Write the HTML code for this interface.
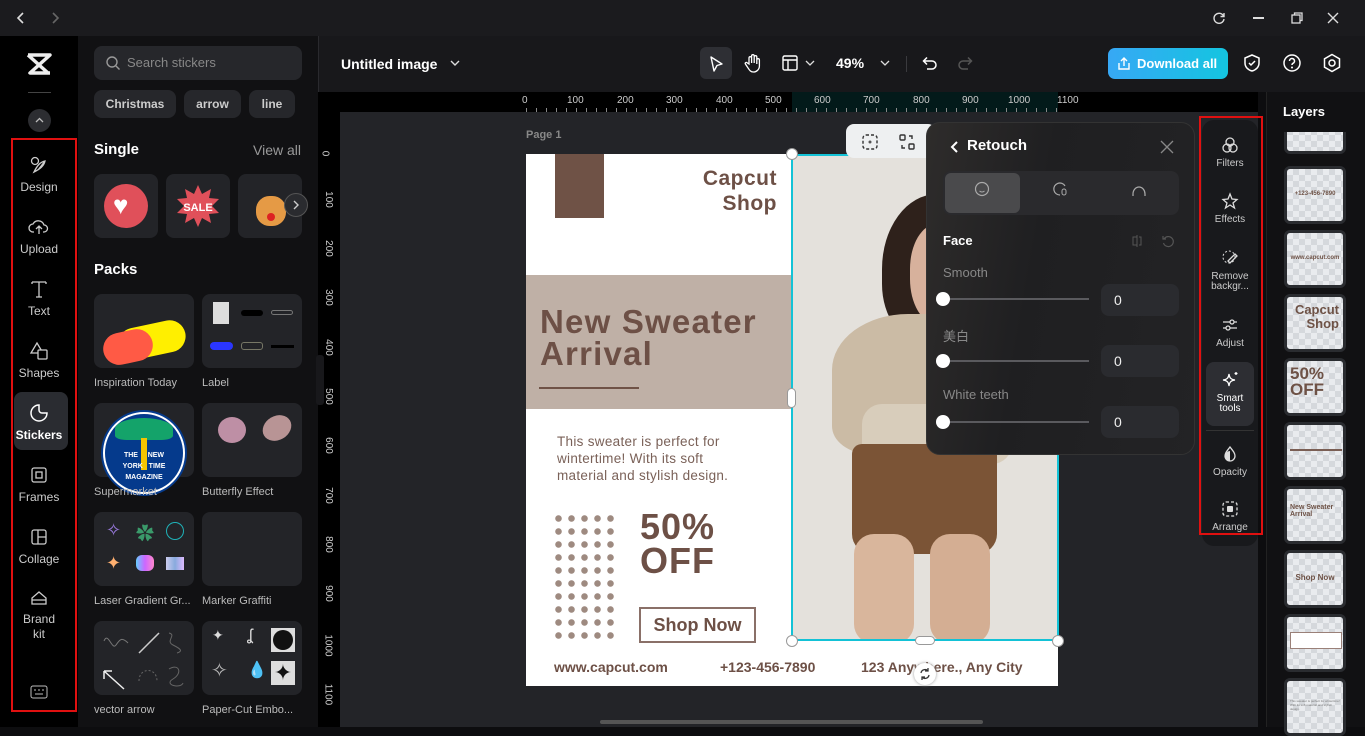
<!DOCTYPE html>
<html><head><meta charset="utf-8"><style>
*{box-sizing:border-box;margin:0;padding:0}
body{width:1365px;height:727px;overflow:hidden;background:#0d0d0f;font-family:"Liberation Sans","Noto Sans CJK SC",sans-serif;position:relative;color:#ddd}
.a{position:absolute}
.rail-i{position:absolute;left:0;width:78px;text-align:center;font-size:12px;color:#ccc}
.rail-i svg{display:block;margin:0 auto 5px}
.chip{position:absolute;top:90px;height:28px;border-radius:8px;background:#26272b;color:#ccc;font-size:12px;font-weight:bold;line-height:28px;text-align:center}
.card{position:absolute;background:#232428;border-radius:8px}
.lbl{position:absolute;font-size:11px;color:#bbb;white-space:nowrap}
.ti{position:absolute;left:1206px;width:48px;text-align:center;font-size:10px;color:#ccc;line-height:10px}
.ti svg{display:block;margin:0 auto 5px}
.ly{position:absolute;left:1284px;width:62px;height:58px;border-radius:6px;border:3px solid #2a2c30;background-color:#e9ebee;background-image:linear-gradient(45deg,#d5d8dc 25%,transparent 25%,transparent 75%,#d5d8dc 75%),linear-gradient(45deg,#d5d8dc 25%,transparent 25%,transparent 75%,#d5d8dc 75%);background-size:12px 12px;background-position:0 0,6px 6px;color:#6e5246;font-weight:bold;overflow:hidden}
.brown{color:#6d5046}
.sl{position:absolute;left:943px;width:146px;height:2px;background:#5a5a5e}
.knob{position:absolute;width:14px;height:14px;border-radius:50%;background:#fff}
.num{position:absolute;left:1101px;width:78px;height:32px;border-radius:8px;background:#2a2b2f;color:#eee;font-size:14px;line-height:32px;padding-left:13px}
</style></head><body>
<div class="a" style="left:0;top:0;width:1365px;height:36px;background:#1b1b1e"></div>
<svg class="a" style="left:14px;top:11px" width="14" height="14"><path d="M9 2L4 7l5 5" stroke="#ddd" stroke-width="1.6" fill="none"/></svg>
<svg class="a" style="left:48px;top:11px" width="14" height="14"><path d="M5 2l5 5-5 5" stroke="#666" stroke-width="1.6" fill="none"/></svg>
<svg class="a" style="left:1212px;top:11px" width="14" height="14"><path d="M11.5 5A5 5 0 1 0 12 8M12 2v3.5H8.5" stroke="#ddd" stroke-width="1.4" fill="none"/></svg>
<div class="a" style="left:1253px;top:17px;width:11px;height:1.5px;background:#ddd"></div>
<svg class="a" style="left:1290px;top:11px" width="14" height="14"><rect x="2" y="4" width="8" height="8" stroke="#ddd" fill="none" stroke-width="1.3"/><path d="M4.5 4V2h7.5v7.5H10" stroke="#ddd" fill="none" stroke-width="1.3"/></svg>
<svg class="a" style="left:1326px;top:11px" width="14" height="14"><path d="M2 2l10 10M12 2L2 12" stroke="#ddd" stroke-width="1.4"/></svg>

<div class="a" style="left:0;top:36px;width:78px;height:691px;background:#000"></div>
<svg class="a" style="left:26px;top:52px" width="26" height="24"><path d="M2 3h22L4 21h20M2 3l20 18M24 3L4 21" stroke="#eee" stroke-width="3.5" fill="none" stroke-linejoin="round"/></svg>
<div class="a" style="left:28px;top:92px;width:23px;height:1px;background:#444"></div>
<div class="a" style="left:28px;top:109px;width:23px;height:23px;border-radius:50%;background:#2c2d31"></div>
<svg class="a" style="left:34px;top:115px" width="11" height="11"><path d="M2 7l3.5-3.5L9 7" stroke="#bbb" stroke-width="1.3" fill="none"/></svg>
<div class="a" style="left:11px;top:138px;width:66px;height:574px;border:2px solid #e01010"></div>
<div class="rail-i" style="top:155px"><svg width="20" height="20"><circle cx="6" cy="6" r="3.5" stroke="#ccc" fill="none" stroke-width="1.3"/><path d="M9 15l7-9M5 17c3-6 6-10 11-11-1 5-5 8-11 11z" stroke="#ccc" fill="none" stroke-width="1.3"/></svg>Design</div>
<div class="rail-i" style="top:217px"><svg width="22" height="20"><path d="M6 15H5a4 4 0 0 1 0-8 6 6 0 0 1 11 1 3.5 3.5 0 0 1 0 7h-1M11 17V9M8 12l3-3 3 3" stroke="#ccc" fill="none" stroke-width="1.3"/></svg>Upload</div>
<div class="rail-i" style="top:279px"><svg width="20" height="20"><path d="M3 3h14M10 3v15M3 3v2M17 3v2M7 18h6" stroke="#ccc" fill="none" stroke-width="1.3"/></svg>Text</div>
<div class="rail-i" style="top:341px"><svg width="20" height="20"><path d="M8 2L2 12h12z" stroke="#ccc" fill="none" stroke-width="1.3"/><rect x="9" y="9" width="9" height="9" rx="1" stroke="#ccc" fill="#000" stroke-width="1.3"/></svg>Shapes</div>
<div class="a" style="left:14px;top:392px;width:54px;height:58px;border-radius:8px;background:#2a2c31"></div>
<div class="rail-i" style="top:403px;color:#fff;font-weight:bold"><svg width="20" height="20"><path d="M10 2a8 8 0 1 0 8 8h-5a3 3 0 0 1-3-3z" stroke="#fff" fill="none" stroke-width="1.5"/></svg>Stickers</div>
<div class="rail-i" style="top:465px"><svg width="20" height="20"><rect x="3" y="3" width="14" height="14" rx="2" stroke="#ccc" fill="none" stroke-width="1.3"/><rect x="7" y="7" width="6" height="6" stroke="#ccc" fill="none" stroke-width="1.3"/></svg>Frames</div>
<div class="rail-i" style="top:527px"><svg width="20" height="20"><rect x="3" y="3" width="14" height="14" rx="2" stroke="#ccc" fill="none" stroke-width="1.3"/><path d="M9 3v14M9 10h8" stroke="#ccc" stroke-width="1.3"/></svg>Collage</div>
<div class="rail-i" style="top:589px;line-height:15px"><svg width="20" height="18"><path d="M3 15V9l7-6 7 6v6zM3 11h14" stroke="#ccc" fill="none" stroke-width="1.3"/></svg>Brand<br>kit</div>
<svg class="a" style="left:30px;top:685px" width="18" height="14"><rect x="1" y="1" width="16" height="12" rx="2" stroke="#bbb" fill="none"/><path d="M4 5h2M8 5h2M12 5h2M5 9h8" stroke="#bbb"/></svg>

<div class="a" style="left:78px;top:36px;width:240px;height:691px;background:#111113"></div>
<div class="a" style="left:94px;top:46px;width:208px;height:34px;border-radius:8px;background:#26272b"></div>
<svg class="a" style="left:105px;top:55px" width="16" height="16"><circle cx="7" cy="7" r="5" stroke="#999" fill="none" stroke-width="1.4"/><path d="M11 11l3.5 3.5" stroke="#999" stroke-width="1.4"/></svg>
<div class="a" style="left:127px;top:55px;font-size:13px;color:#888">Search stickers</div>
<div class="chip" style="left:94px;width:82px">Christmas</div>
<div class="chip" style="left:184px;width:57px">arrow</div>
<div class="chip" style="left:249px;width:46px">line</div>
<div class="a" style="left:94px;top:141px;font-size:15px;font-weight:bold;color:#fff">Single</div>
<div class="a" style="left:253px;top:142px;font-size:14px;color:#999">View all</div>
<div class="card" style="left:94px;top:174px;width:64px;height:64px"></div>
<div class="a" style="left:104px;top:184px;width:44px;height:44px;border-radius:50%;background:#e0505a"></div>
<div class="a" style="left:113px;top:192px;font-size:26px;color:#fff;line-height:26px">♥</div>
<div class="card" style="left:166px;top:174px;width:64px;height:64px"></div>
<svg class="a" style="left:176px;top:184px" width="44" height="44"><polygon points="22,1 26,10 35,5 33,14 43,15 36,22 43,29 33,30 35,39 26,34 22,43 18,34 9,39 11,30 1,29 8,22 1,15 11,14 9,5 18,10" fill="#e0505a"/><text x="22" y="27" font-size="11" font-weight="bold" fill="#fff" text-anchor="middle" font-family="Liberation Sans">SALE</text></svg>
<div class="card" style="left:238px;top:174px;width:64px;height:64px"></div>
<div class="a" style="left:256px;top:196px;width:30px;height:30px;border-radius:45%;background:#e59a45"></div>
<div class="a" style="left:267px;top:213px;width:8px;height:8px;border-radius:50%;background:#d22"></div>
<div class="a" style="left:284px;top:193px;width:24px;height:24px;border-radius:50%;background:#2a2b2f;border:1px solid #555"></div>
<svg class="a" style="left:291px;top:200px" width="10" height="10"><path d="M3 1l4 4-4 4" stroke="#ccc" stroke-width="1.4" fill="none"/></svg>
<div class="a" style="left:94px;top:261px;font-size:15px;font-weight:bold;color:#fff">Packs</div>
<div class="card" style="left:94px;top:294px;width:100px;height:74px"></div>
<div class="a" style="left:118px;top:324px;width:68px;height:32px;border-radius:16px;background:#ffef00;transform:rotate(-12deg)"></div>
<div class="a" style="left:103px;top:331px;width:50px;height:32px;border-radius:16px;background:#ff5a45;transform:rotate(-12deg)"></div>
<div class="lbl" style="left:94px;top:377px">Inspiration Today</div>
<div class="card" style="left:202px;top:294px;width:100px;height:74px"></div>
<div class="a" style="left:213px;top:302px;width:16px;height:22px;background:#ddd"></div>
<div class="a" style="left:241px;top:310px;width:22px;height:6px;border-radius:3px;background:#000"></div>
<div class="a" style="left:271px;top:310px;width:22px;height:5px;border-radius:3px;border:1px solid #777"></div>
<div class="a" style="left:210px;top:342px;width:23px;height:8px;border-radius:4px;background:#2a36ff"></div>
<div class="a" style="left:241px;top:342px;width:22px;height:8px;border-radius:3px;border:1px solid #776"></div>
<div class="a" style="left:271px;top:345px;width:23px;height:3px;background:#000"></div>
<div class="lbl" style="left:202px;top:377px">Label</div>
<div class="card" style="left:94px;top:403px;width:100px;height:74px"></div>
<div class="a" style="left:103px;top:412px;width:82px;height:82px;border-radius:50%;background:#053a8c;border:2px solid #fff;box-shadow:0 0 0 2px #053a8c"></div>
<div class="a" style="left:115px;top:418px;width:58px;height:22px;border-radius:50% 50% 20% 20%;background:#14a36a"></div>
<div class="a" style="left:141px;top:438px;width:6px;height:32px;background:#f5c400"></div>
<div class="a" style="left:104px;top:450px;width:80px;font-size:7px;font-weight:bold;color:#fff;text-align:center;line-height:11px">THE &nbsp;&nbsp;&nbsp;&nbsp;NEW<br>YORK &nbsp;&nbsp;TIME<br>MAGAZINE</div>
<div class="lbl" style="left:94px;top:486px">Supermarket</div>
<div class="card" style="left:202px;top:403px;width:100px;height:74px"></div>
<div class="a" style="left:218px;top:417px;width:28px;height:26px;border-radius:50%;background:#d9a2bb;opacity:.85"></div>
<div class="a" style="left:262px;top:416px;width:30px;height:24px;border-radius:50%;background:#d2a8a8;opacity:.85;transform:rotate(-30deg)"></div>
<div class="lbl" style="left:202px;top:486px">Butterfly Effect</div>
<div class="card" style="left:94px;top:512px;width:100px;height:74px"></div>
<div class="a" style="left:106px;top:520px;font-size:18px;color:#9a7adf">✧</div>
<div class="a" style="left:136px;top:520px;font-size:18px;color:#3a9a6a">✿</div>
<div class="a" style="left:166px;top:522px;width:18px;height:18px;border-radius:50%;border:1.5px solid #1fb2b8"></div>
<div class="a" style="left:106px;top:553px;font-size:18px;color:#ffb070">✦</div>
<div class="a" style="left:136px;top:555px;width:18px;height:16px;border-radius:6px;background:linear-gradient(90deg,#6cf,#c6f,#f8c)"></div>
<div class="a" style="left:166px;top:557px;width:18px;height:13px;background:linear-gradient(90deg,#cce,#8ad,#dbf)"></div>
<div class="lbl" style="left:94px;top:595px">Laser Gradient Gr...</div>
<div class="card" style="left:202px;top:512px;width:100px;height:74px"></div>
<div class="lbl" style="left:202px;top:595px">Marker Graffiti</div>
<div class="card" style="left:94px;top:621px;width:100px;height:74px"></div>
<svg class="a" style="left:94px;top:621px" width="100" height="74"><path d="M10 20c4-10 8 10 12 4s6-8 12-2" stroke="#777" fill="none"/><path d="M45 32l20-20" stroke="#ccc" stroke-width="1.5"/><path d="M75 12c8 2-4 8 4 12s10 6 4 8" stroke="#666" fill="none"/><path d="M10 50l20 18M10 50v8M10 50h8" stroke="#eee" stroke-width="1.5" fill="none"/><path d="M45 60c0-14 18-14 18 0" stroke="#666" fill="none" stroke-dasharray="2 2"/><path d="M75 48c10-6 14 4 4 10s8 10 10 4" stroke="#666" fill="none"/></svg>
<div class="lbl" style="left:94px;top:704px">vector arrow</div>
<div class="card" style="left:202px;top:621px;width:100px;height:74px"></div>
<div class="a" style="left:271px;top:628px;width:24px;height:24px;background:#ddd"><div style="margin:2px;width:20px;height:20px;border-radius:50%;background:#111"></div></div>
<div class="a" style="left:271px;top:661px;width:24px;height:24px;background:#ddd;color:#111;font-size:22px;line-height:24px;text-align:center">✦</div>
<div class="a" style="left:212px;top:627px;font-size:14px;color:#ddd">✦</div>
<div class="a" style="left:247px;top:627px;font-size:16px;color:#ddd">ʆ</div>
<div class="a" style="left:211px;top:658px;font-size:20px;color:#bbb">✧</div>
<div class="a" style="left:247px;top:660px;font-size:16px;color:#eee">💧</div>
<div class="lbl" style="left:202px;top:704px">Paper-Cut Embo...</div>

<div class="a" style="left:318px;top:36px;width:1047px;height:56px;background:#18181b;border-left:1px solid #2a2a2e"></div>
<div class="a" style="left:341px;top:56px;font-size:14px;font-weight:bold;color:#fff">Untitled image</div>
<svg class="a" style="left:449px;top:58px" width="12" height="10"><path d="M2 3l4 4 4-4" stroke="#ddd" stroke-width="1.4" fill="none"/></svg>
<div class="a" style="left:700px;top:47px;width:32px;height:32px;border-radius:6px;background:#2e2f34"></div>
<svg class="a" style="left:708px;top:55px" width="16" height="18"><path d="M3 2l11 7-5 1.5L6 16z" stroke="#fff" stroke-width="1.4" fill="none" stroke-linejoin="round"/></svg>
<svg class="a" style="left:743px;top:53px" width="20" height="20"><path d="M6 11V5a1.3 1.3 0 0 1 2.6 0v5V3a1.3 1.3 0 0 1 2.6 0v7V4a1.3 1.3 0 0 1 2.6 0v7V7a1.3 1.3 0 0 1 2.6 0v6a6 6 0 0 1-6 6c-3 0-4-2-6-5l-2-3c-.7-1.3 1-2.3 2-1z" stroke="#fff" stroke-width="1.3" fill="none"/></svg>
<svg class="a" style="left:781px;top:54px" width="18" height="18"><rect x="2" y="2" width="14" height="14" rx="1.5" stroke="#fff" fill="none" stroke-width="1.4"/><path d="M2 6h14M7 6v10" stroke="#fff" stroke-width="1.4"/></svg>
<svg class="a" style="left:804px;top:58px" width="12" height="10"><path d="M2 3l4 4 4-4" stroke="#ddd" stroke-width="1.3" fill="none"/></svg>
<div class="a" style="left:836px;top:55px;font-size:14px;font-weight:bold;color:#fff">49%</div>
<svg class="a" style="left:879px;top:58px" width="12" height="10"><path d="M2 3l4 4 4-4" stroke="#ddd" stroke-width="1.3" fill="none"/></svg>
<div class="a" style="left:906px;top:56px;width:1px;height:16px;background:#3a3a3e"></div>
<svg class="a" style="left:920px;top:54px" width="18" height="18"><path d="M4 7h8a4 4 0 0 1 0 8H7M7 3.5L3.5 7 7 10.5" stroke="#fff" stroke-width="1.5" fill="none"/></svg>
<svg class="a" style="left:957px;top:54px" width="18" height="18"><path d="M14 7H6a4 4 0 0 0 0 8h5M11 3.5L14.5 7 11 10.5" stroke="#555" stroke-width="1.5" fill="none"/></svg>
<div class="a" style="left:1108px;top:48px;width:120px;height:31px;border-radius:7px;background:linear-gradient(90deg,#37a8f5,#14c5e0)"></div>
<svg class="a" style="left:1117px;top:56px" width="14" height="15"><path d="M2 7v6h10V7M7 10V2M4 5l3-3 3 3" stroke="#fff" stroke-width="1.4" fill="none"/></svg>
<div class="a" style="left:1137px;top:56px;font-size:13px;font-weight:bold;color:#fff">Download all</div>
<svg class="a" style="left:1242px;top:53px" width="20" height="20"><path d="M10 2l7 3v5c0 4-3 7-7 8-4-1-7-4-7-8V5z" stroke="#fff" stroke-width="1.5" fill="none"/><path d="M7 10l2 2 4-4" stroke="#fff" stroke-width="1.5" fill="none"/></svg>
<svg class="a" style="left:1282px;top:53px" width="20" height="20"><circle cx="10" cy="10" r="8" stroke="#fff" stroke-width="1.5" fill="none"/><path d="M7.5 8a2.5 2.5 0 1 1 3.5 2.3c-.8.4-1 1-1 1.7" stroke="#fff" stroke-width="1.5" fill="none"/><circle cx="10" cy="14.5" r="1" fill="#fff"/></svg>
<svg class="a" style="left:1322px;top:53px" width="20" height="20"><path d="M10 1.5l7.5 4.3v8.4L10 18.5l-7.5-4.3V5.8z" stroke="#fff" stroke-width="1.5" fill="none"/><circle cx="10" cy="10" r="3" stroke="#fff" stroke-width="1.5" fill="none"/></svg>

<div class="a" style="left:318px;top:92px;width:22px;height:635px;background:#000"></div>
<div class="a" style="left:340px;top:92px;width:918px;height:20px;background:#000"></div>
<div class="a" style="left:792px;top:92px;width:266px;height:20px;background:#031a1a"></div>
<div class="a" style="left:340px;top:112px;width:918px;height:615px;background:#232428"></div>
<div class="a" style="left:526px;top:108px;width:540px;height:4px;background:repeating-linear-gradient(90deg,#888 0 1px,transparent 1px 10px)"></div>
<div class="a" style="left:518px;top:95px;font-size:10px;color:#ccc;width:560px;height:12px">
<span class="a" style="left:4px">0</span><span class="a" style="left:49px">100</span><span class="a" style="left:99px">200</span><span class="a" style="left:148px">300</span><span class="a" style="left:198px">400</span><span class="a" style="left:247px">500</span><span class="a" style="left:296px">600</span><span class="a" style="left:345px">700</span><span class="a" style="left:395px">800</span><span class="a" style="left:444px">900</span><span class="a" style="left:490px">1000</span><span class="a" style="left:539px">1100</span></div>
<div class="a" style="left:318px;top:140px;width:22px;height:570px;font-size:10px;color:#ccc">
<span class="a" style="left:4px;top:8px;transform:rotate(90deg)">0</span><span class="a" style="left:2px;top:54px;transform:rotate(90deg)">100</span><span class="a" style="left:2px;top:103px;transform:rotate(90deg)">200</span><span class="a" style="left:2px;top:152px;transform:rotate(90deg)">300</span><span class="a" style="left:2px;top:202px;transform:rotate(90deg)">400</span><span class="a" style="left:2px;top:251px;transform:rotate(90deg)">500</span><span class="a" style="left:2px;top:300px;transform:rotate(90deg)">600</span><span class="a" style="left:2px;top:350px;transform:rotate(90deg)">700</span><span class="a" style="left:2px;top:399px;transform:rotate(90deg)">800</span><span class="a" style="left:2px;top:448px;transform:rotate(90deg)">900</span><span class="a" style="left:-1px;top:500px;transform:rotate(90deg)">1000</span><span class="a" style="left:-1px;top:549px;transform:rotate(90deg)">1100</span></div>
<div class="a" style="left:526px;top:129px;font-size:11px;color:#888;font-weight:bold">Page 1</div>
<div class="a" style="left:316px;top:355px;width:8px;height:50px;background:#18181b;border-radius:3px"></div>
<div class="a" style="left:600px;top:720px;width:383px;height:4px;border-radius:2px;background:#555"></div>

<div class="a" style="left:526px;top:154px;width:532px;height:532px;background:#fff"></div>
<div class="a" style="left:555px;top:154px;width:49px;height:64px;background:#6f5246"></div>
<div class="a brown" style="left:640px;top:166px;width:137px;text-align:right;font-size:21px;font-weight:bold;line-height:25px;letter-spacing:.5px">Capcut<br>Shop</div>
<div class="a" style="left:526px;top:275px;width:291px;height:134px;background:#bfb0a6"></div>
<div class="a" style="left:792px;top:154px;width:266px;height:487px;background:#e4e1dc;overflow:hidden">
 <div class="a" style="left:90px;top:40px;width:110px;height:150px;border-radius:50% 50% 40% 40%;background:#2e211b"></div>
 <div class="a" style="left:118px;top:70px;width:60px;height:100px;border-radius:45%;background:#d7b19c"></div>
 <div class="a" style="left:40px;top:160px;width:190px;height:140px;border-radius:40% 40% 20% 20%;background:#cbbba5"></div>
 <div class="a" style="left:70px;top:250px;width:150px;height:60px;border-radius:20px;background:#d8cdbb"></div>
 <div class="a" style="left:60px;top:290px;width:145px;height:110px;border-radius:10px 10px 20px 20px;background:#7b5436"></div>
 <div class="a" style="left:62px;top:380px;width:60px;height:110px;border-radius:20px;background:#d9b69c"></div>
 <div class="a" style="left:138px;top:380px;width:60px;height:110px;border-radius:20px;background:#d4ae93"></div>
</div>
<div class="a" style="left:791px;top:154px;width:268px;height:487px;border:2px solid #13c2d6"></div>
<div class="a" style="left:786px;top:148px;width:12px;height:12px;border-radius:50%;background:#fff;border:1px solid #999"></div>
<div class="a" style="left:786px;top:635px;width:12px;height:12px;border-radius:50%;background:#fff;border:1px solid #999"></div>
<div class="a" style="left:1052px;top:635px;width:12px;height:12px;border-radius:50%;background:#fff;border:1px solid #999"></div>
<div class="a" style="left:787px;top:388px;width:9px;height:20px;border-radius:5px;background:#fff;border:1px solid #999"></div>
<div class="a" style="left:915px;top:636px;width:20px;height:9px;border-radius:5px;background:#fff;border:1px solid #999"></div>
<div class="a brown" style="left:540px;top:306px;font-size:33px;font-weight:bold;line-height:32px;white-space:nowrap;letter-spacing:1.2px">New Sweater<br>Arrival</div>
<div class="a" style="left:539px;top:387px;width:100px;height:2px;background:#6f5246"></div>
<div class="a brown" style="left:557px;top:433px;font-size:13.5px;line-height:17px;color:#7a6158;letter-spacing:.3px">This sweater is perfect for<br>wintertime! With its soft<br>material and stylish design.</div>
<div class="a" style="left:552px;top:512px;width:64px;height:128px;background:radial-gradient(circle,#9e8a80 3px,transparent 3.5px);background-size:13px 13px"></div>
<div class="a brown" style="left:640px;top:510px;font-size:36px;font-weight:bold;line-height:34px;letter-spacing:1px">50%<br>OFF</div>
<div class="a brown" style="left:639px;top:607px;width:117px;height:36px;border:2px solid #8a7068;font-size:18px;font-weight:bold;line-height:32px;text-align:center">Shop Now</div>
<div class="a brown" style="left:554px;top:659px;font-size:14px;font-weight:bold">www.capcut.com</div>
<div class="a brown" style="left:720px;top:659px;font-size:14px;font-weight:bold">+123-456-7890</div>
<div class="a brown" style="left:861px;top:659px;font-size:14px;font-weight:bold">123 Anywhere., Any City</div>
<div class="a" style="left:914px;top:663px;width:22px;height:22px;border-radius:50%;background:#fff;box-shadow:0 0 3px #999"></div>
<svg class="a" style="left:918px;top:667px" width="14" height="14"><path d="M3 6a4 4 0 0 1 7-2M11 8a4 4 0 0 1-7 2M10 1v3H7M4 13v-3h3" stroke="#333" stroke-width="1.3" fill="none"/></svg>
<div class="a" style="left:846px;top:124px;width:90px;height:34px;border-radius:8px;background:#eef0f1"></div>
<svg class="a" style="left:861px;top:133px" width="18" height="18"><rect x="2" y="2" width="14" height="14" rx="3" stroke="#333" stroke-width="1.4" fill="none" stroke-dasharray="3 2"/><circle cx="9" cy="9" r="1.5" fill="#555"/></svg>
<svg class="a" style="left:898px;top:133px" width="18" height="18"><rect x="2" y="2" width="5" height="5" rx="1" stroke="#333" stroke-width="1.4" fill="none"/><rect x="11" y="11" width="5" height="5" rx="1" stroke="#333" stroke-width="1.4" fill="none"/><path d="M11 3h3v3M7 15H4v-3" stroke="#333" stroke-width="1.4" fill="none"/></svg>

<div class="a" style="left:926px;top:122px;width:269px;height:333px;border-radius:14px;background:linear-gradient(100deg,#2e2c2b 0%,#1f1f21 40%,#232325 100%);border:1px solid #333"></div>
<svg class="a" style="left:949px;top:140px" width="12" height="14"><path d="M8 2L3 7l5 5" stroke="#fff" stroke-width="2" fill="none"/></svg>
<div class="a" style="left:967px;top:137px;font-size:15px;font-weight:bold;color:#fff">Retouch</div>
<svg class="a" style="left:1160px;top:140px" width="14" height="14"><path d="M1 1l12 12M13 1L1 13" stroke="#888" stroke-width="1.3"/></svg>
<div class="a" style="left:943px;top:171px;width:236px;height:44px;border-radius:8px;background:#2a2a2d"></div>
<div class="a" style="left:945px;top:173px;width:75px;height:40px;border-radius:6px;background:#4a4a4c"></div>
<svg class="a" style="left:974px;top:181px" width="16" height="16"><circle cx="8" cy="8" r="6.5" stroke="#aaa" fill="none" stroke-width="1.2"/><path d="M5.5 10c1.5 1.2 3.5 1.2 5 0" stroke="#aaa" fill="none"/></svg>
<svg class="a" style="left:1052px;top:181px" width="16" height="16"><path d="M13 5a6 6 0 1 0-5 9" stroke="#aaa" fill="none" stroke-width="1.2"/><rect x="10" y="8" width="4" height="6" rx="2" stroke="#aaa" fill="none"/></svg>
<svg class="a" style="left:1130px;top:181px" width="18" height="16"><path d="M3 13a6 7 0 1 1 12 0M2 14h2M14 14h2" stroke="#aaa" fill="none" stroke-width="1.2"/></svg>
<div class="a" style="left:943px;top:233px;font-size:13px;font-weight:bold;color:#fff">Face</div>
<svg class="a" style="left:1130px;top:234px" width="14" height="14"><path d="M7 1v12M7 3H3v8h4M9 3h2v8H9" stroke="#555" fill="none"/></svg>
<svg class="a" style="left:1161px;top:234px" width="14" height="14"><path d="M3 5a5 5 0 1 1-.5 4M2 2v3h3" stroke="#555" fill="none" stroke-width="1.2"/></svg>
<div class="a" style="left:943px;top:265px;font-size:13px;color:#888">Smooth</div>
<div class="sl" style="top:298px"></div><div class="knob" style="left:936px;top:292px"></div>
<div class="num" style="top:284px">0</div>
<div class="a" style="left:943px;top:326px;font-size:13px;color:#888">美白</div>
<div class="sl" style="top:360px"></div><div class="knob" style="left:936px;top:354px"></div>
<div class="num" style="top:345px">0</div>
<div class="a" style="left:943px;top:387px;font-size:13px;color:#888">White teeth</div>
<div class="sl" style="top:421px"></div><div class="knob" style="left:936px;top:415px"></div>
<div class="num" style="top:406px">0</div>

<div class="a" style="left:1202px;top:120px;width:56px;height:426px;border-radius:12px;background:#18191c"></div>
<div class="a" style="left:1206px;top:362px;width:48px;height:64px;border-radius:8px;background:#2d2e33"></div>
<div class="a" style="left:1206px;top:430px;width:48px;height:1px;background:#333"></div>
<div class="ti" style="top:136px"><svg width="18" height="18"><circle cx="9" cy="6" r="4" stroke="#ddd" fill="none" stroke-width="1.3"/><circle cx="6" cy="12" r="4" stroke="#ddd" fill="none" stroke-width="1.3"/><circle cx="12" cy="12" r="4" stroke="#ddd" fill="none" stroke-width="1.3"/></svg>Filters</div>
<div class="ti" style="top:192px"><svg width="18" height="18"><path d="M9 2l2 5 5 .5-4 3.5 1.5 5L9 13l-4.5 3L6 11 2 7.5 7 7z" stroke="#ddd" fill="none" stroke-width="1.3"/></svg>Effects</div>
<div class="ti" style="top:249px"><svg width="18" height="18"><circle cx="8" cy="8" r="6" stroke="#ddd" fill="none" stroke-dasharray="2 2"/><path d="M7 12l7-7 2 2-7 7z" stroke="#ddd" fill="none" stroke-width="1.3"/></svg>Remove<br>backgr...</div>
<div class="ti" style="top:316px"><svg width="18" height="18"><path d="M2 6h14M2 12h14" stroke="#ddd" stroke-width="1.3"/><circle cx="11" cy="6" r="2" fill="#18191c" stroke="#ddd" stroke-width="1.3"/><circle cx="7" cy="12" r="2" fill="#18191c" stroke="#ddd" stroke-width="1.3"/></svg>Adjust</div>
<div class="ti" style="top:371px;color:#fff"><svg width="18" height="18"><path d="M8 3c.5 4 2 5.5 6 6-4 .5-5.5 2-6 6-.5-4-2-5.5-6-6 4-.5 5.5-2 6-6zM15 1v3M13.5 2.5h3" stroke="#fff" fill="none" stroke-width="1.3"/></svg>Smart<br>tools</div>
<div class="ti" style="top:445px"><svg width="18" height="18"><path d="M9 2c3 4 5 6 5 9a5 5 0 0 1-10 0c0-3 2-5 5-9z" stroke="#ddd" fill="none" stroke-width="1.3"/><path d="M9 16a5 5 0 0 1 0-10z" fill="#ddd"/></svg>Opacity</div>
<div class="ti" style="top:500px"><svg width="18" height="18"><rect x="2" y="2" width="14" height="14" rx="3" stroke="#ddd" fill="none" stroke-dasharray="3 2" stroke-width="1.3"/><rect x="6" y="6" width="6" height="6" rx="1" fill="#ddd"/></svg>Arrange</div>
<div class="a" style="left:1199px;top:116px;width:64px;height:419px;border:2px solid #e01010"></div>

<div class="a" style="left:1266px;top:92px;width:99px;height:635px;background:#111113;border-left:1px solid #222"></div>
<div class="a" style="left:1283px;top:104px;font-size:13px;font-weight:bold;color:#fff">Layers</div>
<div class="a" style="left:1284px;top:132px;width:62px;height:22px;overflow:hidden"><div class="ly" style="left:0;top:-36px"></div></div>
<div class="ly" style="top:166px;font-size:6px;line-height:50px;text-align:center">+123-456-7890</div>
<div class="ly" style="top:230px;font-size:6px;line-height:50px;text-align:center">www.capcut.com</div>
<div class="ly" style="top:294px;font-size:13px;line-height:14px;text-align:right;padding:6px 4px 0 0">Capcut<br>Shop</div>
<div class="ly" style="top:358px;font-size:17px;line-height:16px;padding:5px 0 0 3px">50%<br>OFF</div>
<div class="ly" style="top:422px"><div class="a" style="left:3px;top:24px;width:52px;height:2px;background:#7a5e54"></div></div>
<div class="ly" style="top:486px;font-size:7px;line-height:7px;padding:15px 0 0 3px">New Sweater<br>Arrival</div>
<div class="ly" style="top:550px;font-size:8px;line-height:50px;text-align:center">Shop Now</div>
<div class="ly" style="top:614px"><div class="a" style="left:3px;top:15px;width:52px;height:17px;background:#fff;border:1px solid #9a8078"></div></div>
<div class="ly" style="top:678px;font-size:3px;line-height:4px;padding:18px 3px 0;color:#777;font-weight:normal">This sweater is perfect for wintertime! With its soft material and stylish design.</div>
</body></html>
